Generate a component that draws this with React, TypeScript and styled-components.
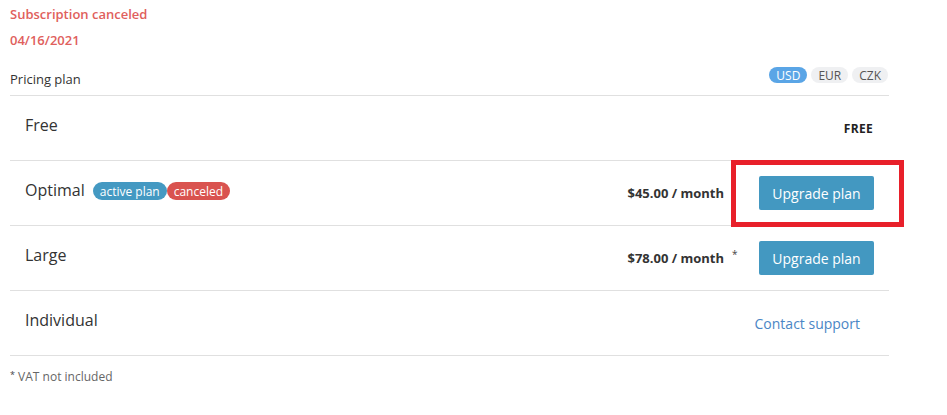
import React from "react";
import styled, { createGlobalStyle } from "styled-components";

const Global = createGlobalStyle`
  html, body { margin: 0; padding: 0; background: #fff; }
  body { font-family: "Open Sans", "Noto Sans", sans-serif; color: #333; }
`;

const Page = styled.div`
  width: 879px;
  padding: 5px 0 0 10px;
`;

const Notice = styled.div`
  font-size: 13px;
  font-weight: 600;
  color: #e0605c;
  line-height: 18px;
  margin-bottom: 8px;
`;

const HeaderRow = styled.div`
  display: flex;
  justify-content: space-between;
  align-items: flex-end;
  padding: 10px 0 7px;
  border-bottom: 1px solid #e0e0e0;
`;

const Label = styled.div`
  font-size: 13px;
  line-height: 18px;
  color: #333;
`;

const Pills = styled.div`
  display: flex;
  gap: 4px;
  margin-bottom: 5px;
  margin-right: 1px;
`;

const Pill = styled.span<{ $active?: boolean }>`
  display: inline-flex;
  align-items: center;
  height: 16px;
  padding: 0 7px;
  border-radius: 8px;
  font-size: 12px;
  background: ${(p) => (p.$active ? "#5aa5e6" : "#eff0f2")};
  color: ${(p) => (p.$active ? "#fff" : "#555")};
`;

const Row = styled.div`
  display: flex;
  align-items: center;
  height: 64px;
  border-bottom: 1px solid #e0e0e0;
  position: relative;
`;

const Name = styled.div`
  flex: 1;
  display: flex;
  align-items: center;
  padding-left: 15px;
  padding-bottom: 6px;
  font-size: 16px;
  color: #333;
`;

const Badges = styled.span`
  display: inline-flex;
  margin-left: 8px;
  margin-top: 2px;
`;

const Badge = styled.span<{ $tone: "blue" | "red" }>`
  display: inline-flex;
  align-items: center;
  height: 18px;
  padding: 0 7px;
  border-radius: 9px;
  font-size: 12px;
  color: #fff;
  background: ${(p) => (p.$tone === "blue" ? "#4499c2" : "#d9534f")};
`;

const Price = styled.div`
  font-size: 13px;
  font-weight: 700;
  color: #333;
  text-align: right;
`;

const Star = styled.div`
  width: 35px;
  padding-left: 8px;
  box-sizing: border-box;
  align-self: center;
  margin-top: -8px;
  font-size: 10px;
  color: #444;
`;

const Action = styled.div`
  width: 130px;
  box-sizing: border-box;
  display: flex;
  justify-content: flex-end;
  padding-right: 15px;
`;

const Button = styled.button`
  height: 34px;
  width: 115px;
  flex-shrink: 0;
  border: none;
  border-radius: 2px;
  background: #4398c1;
  color: #fff;
  font-family: inherit;
  font-size: 14px;
  padding: 0;
  cursor: pointer;
`;

const FreeTag = styled.span`
  font-size: 12px;
  font-weight: 700;
  color: #222;
  letter-spacing: 0.3px;
  margin-right: 1px;
`;

const Link = styled.a`
  font-size: 14px;
  color: #4a86c5;
  text-decoration: none;
  margin-right: 14px;
  white-space: nowrap;
  flex-shrink: 0;
`;

const Highlight = styled.div`
  position: absolute;
  left: 721px;
  top: -1px;
  width: 173px;
  height: 67px;
  box-sizing: border-box;
  border: 5px solid #e8202a;
  pointer-events: none;
`;

const Footer = styled.div`
  font-size: 12px;
  color: #666;
  margin-top: 12px;
  span { color: #444; font-size: 9px; vertical-align: top; }
`;

export default function App() {
  return (
    <Page>
      <Global />
      <Notice>Subscription canceled</Notice>
      <Notice>04/16/2021</Notice>
      <HeaderRow>
        <Label>Pricing plan</Label>
        <Pills>
          <Pill $active>USD</Pill>
          <Pill>EUR</Pill>
          <Pill>CZK</Pill>
        </Pills>
      </HeaderRow>
      <Row>
        <Name>Free</Name>
        <Action>
          <FreeTag>FREE</FreeTag>
        </Action>
      </Row>
      <Row>
        <Name>
          Optimal
          <Badges>
            <Badge $tone="blue">active plan</Badge>
            <Badge $tone="red">canceled</Badge>
          </Badges>
        </Name>
        <Price>$45.00 / month</Price>
        <Star />
        <Action>
          <Button>Upgrade plan</Button>
        </Action>
        <Highlight />
      </Row>
      <Row>
        <Name>Large</Name>
        <Price>$78.00 / month</Price>
        <Star>*</Star>
        <Action>
          <Button>Upgrade plan</Button>
        </Action>
      </Row>
      <Row>
        <Name>Individual</Name>
        <Action>
          <Link href="#">Contact support</Link>
        </Action>
      </Row>
      <Footer>
        <span>*</span> VAT not included
      </Footer>
    </Page>
  );
}
